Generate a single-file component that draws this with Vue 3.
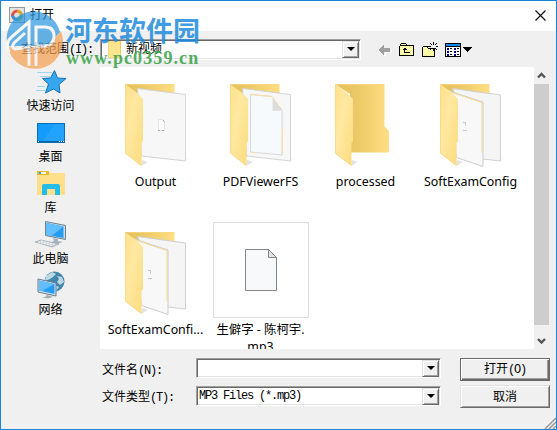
<template>
  <div class="dialog">
    <header class="titlebar">
      <svg class="app-icon" width="16" height="16" viewBox="0 0 16 16">
        <rect x=".5" y=".5" width="15" height="15" fill="#e2e2e2" stroke="#999" />
        <path d="M3.500 9a5 5 0 0 1 4.500-5" stroke="#dc5244" stroke-width="3" fill="none" />
        <path d="M8 4a5 5 0 0 1 4.500 4" stroke="#e6a02d" stroke-width="3" fill="none" />
        <path d="M12.500 8a5 5 0 0 1-4.500 4.500" stroke="#62b348" stroke-width="3" fill="none" />
        <path d="M8 12.500a5 5 0 0 1-4.500-4" stroke="#438dd2" stroke-width="3" fill="none" />
      </svg>
      <span class="title">打开</span>
      <svg class="close" width="11" height="11" viewBox="0 0 11 11">
        <path d="M.5 .5l10 10M10.500 .5l-10 10" stroke="#111" stroke-width="1.2" />
      </svg>
    </header>

    <div class="toolbar">
      <label class="look-label">查找范围<span class="latin">(I):</span></label>
      <div class="combo look-combo">
        <span class="mini-folder"></span>
        <span class="combo-text">新视频</span>
        <button class="drop" type="button"></button>
      </div>
      <svg class="tools" width="96" height="16" viewBox="0 0 96 16" shape-rendering="crispEdges">
        <defs>
          <pattern id="dither" width="2" height="2" patternUnits="userSpaceOnUse">
            <rect width="2" height="2" fill="#ffff5a" />
            <rect width="1" height="1" fill="#fff" />
            <rect x="1" y="1" width="1" height="1" fill="#fff" />
          </pattern>
          <linearGradient id="flap" x1="0" y1="0" x2="1" y2="1">
            <stop offset="0" stop-color="#ffe08a" />
            <stop offset=".4" stop-color="#ffe8a1" />
            <stop offset="1" stop-color="#fbdb7c" />
          </linearGradient>
          <linearGradient id="back" x1="0" y1="0" x2="1" y2="0">
            <stop offset="0" stop-color="#e6c15c" />
            <stop offset=".4" stop-color="#ecc966" />
            <stop offset="1" stop-color="#ffdf83" />
          </linearGradient>
          <linearGradient id="shade" x1="0" y1="0" x2="1" y2="0">
            <stop offset="0" stop-color="#ccc" />
            <stop offset="1" stop-color="#fff" />
          </linearGradient>
        </defs>
        <path d="M6 13.500h1v-3h6.500v-4" stroke="#fff" fill="none" />
        <path d="M0 8l5-5h1v3h6v4H6v3H5z" fill="#a0a0a0" />
        <path d="M21.500 13.500v-9l1-1v-1l1-1h4l1 1v1h7v10z" fill="url(#dither)" stroke="#000" />
        <path d="M22 3.500h6M26.500 10V6M24.500 7.500h4M25.500 6.500h2M26 10.500h6" stroke="#000" fill="none" />
        <path d="M44.500 14.500v-9l1-1h4l1 2h6v8z" fill="url(#dither)" stroke="#000" />
        <path d="M50 0h9v6h-9z" fill="#f0f0f0" />
        <path d="M55.500 0v3M55.500 7v2M50 4.500h3M58 4.500h2" stroke="#000" fill="none" />
        <path d="M52 1h1v1h-1zM53 2h1v1h-1zM58 1h1v1h-1zM57 2h1v1h-1zM52 7h1v1h-1zM53 6h1v1h-1zM58 7h1v1h-1zM57 6h1v1h-1z" />
        <rect x="67.500" y="1.500" width="15" height="13" fill="#fff" stroke="#000" />
        <rect x="68" y="2" width="14" height="2" fill="#1687f0" />
        <path d="M67 4.500h16" stroke="#000" />
        <g v-for="y in [6, 9, 12]" :key="y">
          <rect x="69" :y="y" width="2" height="2" fill="#000080" />
          <rect x="72" :y="y" width="2" height="1" fill="#000" />
          <rect x="76" :y="y" width="2" height="2" fill="#000080" />
          <rect x="79" :y="y" width="2" height="1" fill="#000" />
        </g>
        <path d="M85 5h9l-4.500 5z" fill="#000" />
      </svg>
    </div>

    <div class="body">
      <nav class="places">
        <div class="place">
          <svg width="32" height="26" viewBox="0 0 32 26">
            <path d="M2 3.500h15M5 7.500h10M2 17.500h8M1 21.500h9" stroke="#9bd7f3" stroke-width="1" />
            <path d="M19.500 1.500l3 7.500 8.500 .5-7 6 1 8.500-6.500-4-8 4 3-9-6-5.500 8-.5z" fill="#36a6ee" stroke="#1374b9" />
          </svg>
          <span>快速访问</span>
        </div>
        <div class="place">
          <svg class="desktop" width="28" height="20" viewBox="0 0 28 20">
            <rect x=".5" y=".5" width="27" height="19" fill="#159bfc" stroke="#0870b9" />
            <path d="M18 1h9v17H6z" fill="#31a9ff" opacity=".55" />
            <path d="M1 18.500h26" stroke="#0b62a5" />
            <path d="M1 18.500h1M22 18.500h1M24 18.500h1M26 18.500h1" stroke="#fff" />
          </svg>
          <span>桌面</span>
        </div>
        <div class="place">
          <svg class="library" width="28" height="25" viewBox="0 0 28 25">
            <path d="M0 0h12l1 2h15v22H0z" fill="#ffe08a" />
            <path d="M0 0h12v4H0z" fill="#e9b927" />
            <path d="M2 1h7v2H2z" fill="#fff" />
            <path d="M2 1h2v2H2z" fill="#24a8df" />
            <path d="M5 24V15q0-2 2-2h14q2 0 2 2v9h-5v-6h-8v6z" fill="#24bde9" />
          </svg>
          <span>库</span>
        </div>
        <div class="place">
          <svg width="32" height="28" viewBox="0 0 32 28">
            <path d="M10.500 1.500l20 4v14l-20-4z" fill="#c8dce6" stroke="#71848e" />
            <path d="M11.500 3l17 3.500v11.500l-17-3z" fill="#269df5" />
            <path d="M11.500 3l17 3.500-12 9.500-5-1z" fill="#61beff" />
            <path d="M18 18l5 1v2l5 1-6 2-6-2 3-1z" fill="#a6b5bd" />
            <path d="M0 22l6-2 18 4-7 3z" fill="#cbd2d6" stroke="#929da5" stroke-width=".6" />
            <path d="M3 22l14 3.500M6 21l14 3.500" stroke="#f8fafb" stroke-dasharray="2 1" />
          </svg>
          <span>此电脑</span>
        </div>
        <div class="place">
          <svg width="28" height="28" viewBox="0 0 28 28">
            <circle cx="17.500" cy="10.500" r="10" fill="#4386aa" />
            <path d="M9 5l6-4 4 2-3 3-3 2-5 2zM20 5l5 1 2 5-4 3-3-3 2-3zM18 14l4 2-3 4z" fill="#b9dae5" />
            <path d="M1 8l18 4v13L1 21z" fill="#d1e2ea" stroke="#677e8b" />
            <path d="M2 9.500l15.500 3.500v10L2 19.500z" fill="#249cf5" />
            <path d="M2 9.500l15.500 3.500L5 20l-3-.5z" fill="#62beff" />
            <path d="M9 24l5 1 2 1-5 1.500-6-1 4-1z" fill="#a4b0b7" />
          </svg>
          <span>网络</span>
        </div>
      </nav>

      <main class="files">
        <div v-for="file in files" :key="file.name" class="file">
          <div :class="['thumb', { framed: file.kind === 'file' }]">
            <svg v-if="file.kind === 'file'" width="32" height="42" viewBox="0 0 32 42">
              <path d="M.5 .5h23l8 8v33H.5z" fill="#f8f9fa" stroke="#858585" />
              <path d="M23.500 .5v8h8z" fill="#e4e4e4" stroke="#858585" />
            </svg>
            <svg v-else width="96" height="96" viewBox="0 0 96 96">
              <path d="M33 92l7-4-6-2zM78 87l8-3-8-1zM66 79l8-3-8-2z" fill="url(#shade)" opacity=".6" />
              <path v-if="file.kind === 'empty'" d="M17 10h49.500v42.500l4.500 4.500v21.500H32V20z" fill="url(#back)" />
              <path v-else d="M17 10h49.500v30H35z" fill="url(#back)" />
              <path
                v-if="file.kind === 'single' || file.kind === 'document'"
                d="M29.500 14.500l48 6v66.500l-44-5z"
                fill="#f7f7f7"
                stroke="#d4d4d4"
              />
              <g v-if="file.kind === 'single'">
                <path d="M50.500 45.500h4l2 2v9h-6z" fill="#fbfbfb" stroke="#e6e6e6" />
                <path d="M55 46l1.500 2M50 56.500h2M54 56.500h2" fill="none" stroke="#aaa" />
              </g>
              <g v-if="file.kind === 'document'">
                <path d="M37.500 20.500l21.500 2 10 14V81l-31.500-3z" fill="#f7fafc" stroke="#d8d8d8" />
                <path d="M38 20.500l21 2 9.500 13M69.500 55v24M38 78.500h4" fill="none" stroke="#f7dfa0" />
                <path d="M59.500 24v13l9.500-.5z" fill="#ddd" />
              </g>
              <g v-if="file.kind === 'double'">
                <path d="M29.500 14.500l48 6.500v66l-18-2z" fill="#f5f5f5" stroke="#d0d0d0" />
                <path d="M22 15.500l38 12.500v64.500L33.500 83.500z" fill="#f8f8f8" stroke="#cdcdcd" />
                <path d="M27 18l32 10.500V79" fill="none" stroke="#f3d990" />
                <path d="M40 48.500h2.500v3M40 56.500h4" fill="none" stroke="#c6c6c6" />
              </g>
              <path d="M17 10l11.500 8.500L35 25v42l-1.500 2v23L17 79.500z" fill="url(#flap)" />
              <path d="M17 10.500h49M17.500 10v69L33 91.500" fill="none" stroke="#f5d984" stroke-width=".7" />
            </svg>
          </div>
          <div class="file-name">{{ file.name }}</div>
        </div>
      </main>

      <div class="scrollbar">
        <svg width="15" height="17" viewBox="0 0 15 17"><path d="M4 10.500L7.500 7l3.500 3.500" fill="none" stroke="#555" stroke-width="2.400" /></svg>
        <div class="scroll-thumb"></div>
        <svg class="down" width="15" height="17" viewBox="0 0 15 17"><path d="M4 7l3.500 3.500L11 7" fill="none" stroke="#555" stroke-width="2.400" /></svg>
      </div>
    </div>

    <footer class="fields">
      <label class="field-label">文件名<span class="latin">(N):</span></label>
      <div class="combo"><button class="drop" type="button"></button></div>
      <button class="btn primary" type="button">打开<span class="latin">(O)</span></button>
      <label class="field-label">文件类型<span class="latin">(T):</span></label>
      <div class="combo type-combo"><span class="combo-text latin">MP3 Files (*.mp3)</span><button class="drop" type="button"></button></div>
      <button class="btn" type="button">取消</button>
    </footer>

    <svg class="grip" width="12" height="12" viewBox="0 0 12 12">
      <path d="M1 12L12 1M5 12l7-7M9 12l3-3" stroke="#999" stroke-width="1.5" />
    </svg>

    <div class="watermark">
      <svg class="mark-logo" width="58" height="58" viewBox="0 0 58 58">
        <path d="M2 31A27 27 0 0 1 55 21L43 35H2z" fill="#2f97de" />
        <path d="M3 36h40L56 20A27 27 0 0 1 4 40z" fill="#f5a050" />
        <path d="M22 15L5 28q-3 8 3 8l14-4zM31 16h9q9 0 9 8t-9 10h-9z" fill="#2f97de" />
        <path d="M4 41q-5-10 5-17l15-13v44M24 36L10 38q-4-1-1-6l11-10M31 55V16h9q9 0 9 9t-9 10h-9" fill="none" stroke="#f8f8f8" stroke-width="3" />
      </svg>
      <span class="mark-name">河东软件园</span>
      <span class="mark-url">www.pc0359.cn</span>
    </div>
  </div>
</template>

<script setup>
// \u200b lets the long name wrap before its extension
const files = [
  { name: 'Output', kind: 'single' },
  { name: 'PDFViewerFS', kind: 'document' },
  { name: 'processed', kind: 'empty' },
  { name: 'SoftExamConfig', kind: 'double' },
  { name: 'SoftExamConfi...', kind: 'double' },
  { name: '生僻字 - 陈柯宇.\u200bmp3', kind: 'file' }
]
</script>

<style>
body {
  overflow: hidden;
}
</style>

<style scoped>
.dialog {
  position: relative;
  box-sizing: border-box;
  width: 557px;
  height: 430px;
  border: 1px solid #1883d7;
  background: #f0f0f0;
  color: #000;
  font: 12px/16px "Liberation Sans", "Noto Sans CJK SC", sans-serif;
}

.titlebar {
  display: flex;
  align-items: center;
  box-sizing: border-box;
  height: 30px;
  padding: 0 10px 2px 8px;
  background: #fff;
}

.title {
  margin-left: 5px;
}

.close {
  margin-left: auto;
}

.latin {
  font-family: "Liberation Mono", monospace;
  font-size: 12px;
  letter-spacing: -1.2px;
}

.toolbar {
  display: flex;
  align-items: center;
  height: 36px;
}

.look-label {
  width: 79px;
  padding-left: 20px;
  white-space: nowrap;
}

.combo {
  display: flex;
  align-items: center;
  box-sizing: border-box;
  width: 245px;
  height: 20px;
  border: 1px solid;
  border-color: #a0a0a0 #fff #fff #a0a0a0;
  background: #fff;
  box-shadow: inset 1px 1px #696969, inset -1px -1px #e3e3e3;
}

.look-combo {
  width: 261px;
  height: 21px;
}

.mini-folder {
  width: 11px;
  height: 15px;
  margin-left: 7px;
  border: 1px solid #f6d67a;
  border-right-color: #f1ca5c;
  background: #ffe58e;
}

.look-combo .combo-text {
  margin-left: 5px;
}

.drop {
  display: flex;
  align-items: center;
  justify-content: center;
  box-sizing: border-box;
  width: 17px;
  height: 17px;
  margin: 0 1px 0 auto;
  padding: 0;
  border: 1px solid;
  border-color: #e3e3e3 #696969 #696969 #e3e3e3;
  background: #f0f0f0;
  box-shadow: inset 1px 1px #fff, inset -1px -1px #a0a0a0;
}

.drop::after {
  content: "";
  border: 4px solid transparent;
  border-top-color: #000;
  border-bottom: 0;
}

.tools {
  margin: 2px 0 0 17px;
}

.body {
  display: flex;
  height: 282px;
}

.places {
  width: 99px;
}

.place {
  display: flex;
  flex-direction: column;
  align-items: center;
  justify-content: flex-end;
  height: 51px;
  line-height: 16px;
}

.place:first-child {
  height: 47px;
}

.place span {
  margin-top: 3px;
}

.desktop {
  margin-bottom: 3px;
}

.library {
  margin-bottom: 1px;
}

.files {
  display: grid;
  grid-template-columns: repeat(4, 105px);
  grid-auto-rows: 148px;
  align-content: start;
  box-sizing: border-box;
  width: 434px;
  height: 282px;
  padding: 7px 3px 0;
  overflow: hidden;
  background: #fff;
}

.file {
  display: flex;
  flex-direction: column;
  align-items: center;
}

.thumb {
  display: flex;
  align-items: center;
  justify-content: center;
  box-sizing: border-box;
  width: 96px;
  height: 96px;
}

.framed {
  border: 1px solid #dedede;
}

.file-name {
  width: 102px;
  margin-top: 3px;
  font: 12.4px/17px "Noto Sans", "Noto Sans CJK SC", sans-serif;
  text-align: center;
}

.scrollbar {
  display: flex;
  flex-direction: column;
  width: 15px;
}

.scroll-thumb {
  height: 241px;
  background: #cdcdcd;
}

.down {
  margin-top: auto;
}

.fields {
  display: grid;
  grid-template-columns: 94px 245px 109px;
  grid-template-rows: 23px 23px;
  row-gap: 4px;
  padding: 9px 0 0 101px;
}

.field-label {
  line-height: 25px;
}

.type-combo {
  margin-top: 1px;
}

.btn {
  box-sizing: border-box;
  width: 90px;
  height: 23px;
  margin-left: 19px;
  padding: 0;
  border: 1px solid;
  border-color: #e3e3e3 #696969 #696969 #e3e3e3;
  background: #f0f0f0;
  box-shadow: inset 1px 1px #fff, inset -1px -1px #a0a0a0;
  color: #000;
  font: inherit;
}

.primary {
  border-color: #696969;
  box-shadow: inset 1px 1px #fff, inset -1px -1px #696969, inset -2px -2px #a0a0a0;
}

.type-combo .combo-text {
  margin-left: 2px;
}

.grip {
  position: absolute;
  right: 0;
  bottom: 0;
}

/* Site mark laid over the title bar and toolbar */
.watermark {
  position: absolute;
  top: 10px;
  left: 4px;
  width: 210px;
  height: 60px;
  pointer-events: none;
}

.mark-logo {
  opacity: 0.72;
}

.mark-name {
  position: absolute;
  top: 3px;
  left: 60px;
  color: #228bdc;
  font: bold 27px/32px "Noto Sans CJK SC", sans-serif;
  white-space: nowrap;
  opacity: 0.85;
}

.mark-url {
  position: absolute;
  top: 36px;
  left: 61px;
  color: #37a246;
  font: bold 18px/22px "Liberation Serif", serif;
  letter-spacing: 1.1px;
  opacity: 0.85;
}
</style>
